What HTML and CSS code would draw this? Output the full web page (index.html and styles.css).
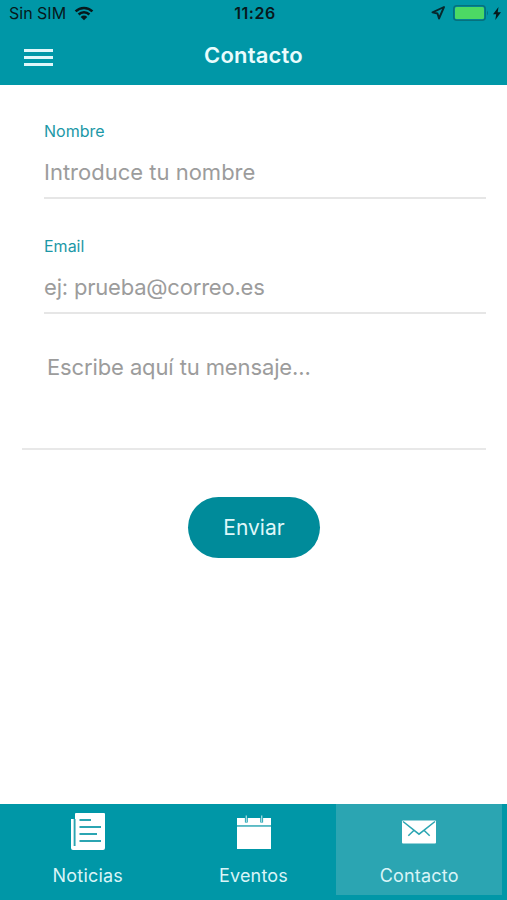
FILE: index.html
```html
<!DOCTYPE html>
<html lang="es">
<head>
    <meta charset="UTF-8">
    <meta name="viewport" content="width=device-width, initial-scale=1.0">
    <title>Contacto</title>
    <link rel="stylesheet" href="styles.css">
</head>
<body>
    <header class="header">
        <div class="status-bar">
            <div class="status-left">
                <span class="carrier">Sin SIM</span>
                <svg class="wifi" width="20" height="15" viewBox="0 0 20 15">
                    <path d="M1.6 5.4a12 12 0 0 1 16.8 0M4.6 8.5a7.7 7.7 0 0 1 10.8 0" fill="none" stroke="#07191c" stroke-width="2.5"/>
                    <path d="M6.7 10.9a4.7 4.7 0 0 1 6.6 0L10 14.2z" fill="#07191c"/>
                </svg>
            </div>
            <span class="time">11:26</span>
            <div class="status-right">
                <svg width="14" height="14" viewBox="0 0 14 14">
                    <path d="M13 1L1.5 6.3l5 1.2 1.5 5z" fill="none" stroke="#07282d" stroke-width="1.9" stroke-linejoin="round"/>
                </svg>
                <svg class="battery" width="36" height="16" viewBox="0 0 36 16">
                    <rect x="0.8" y="0.8" width="31.4" height="14.4" rx="3" fill="none" stroke="#06717d" stroke-width="1.6"/>
                    <rect x="2" y="2" width="29" height="12" rx="1.5" fill="#4cd964"/>
                    <path d="M34 5.5q2 2.5 0 5z" fill="#06717d"/>
                </svg>
                <svg class="bolt" width="8" height="13" viewBox="0 0 8 13">
                    <path d="M5.5 0L0 7.2h3.2L2.3 13 8 5.3H4.7z" fill="#07191c"/>
                </svg>
            </div>
        </div>
        <div class="nav-bar">
            <button class="menu" aria-label="Menú">
                <span></span>
                <span></span>
                <span></span>
            </button>
            <h1>Contacto</h1>
        </div>
    </header>

    <form class="contact-form">
        <div class="field">
            <label for="nombre">Nombre</label>
            <input type="text" id="nombre" placeholder="Introduce tu nombre">
        </div>
        <div class="field">
            <label for="email">Email</label>
            <input type="email" id="email" placeholder="ej: prueba@correo.es">
        </div>
        <textarea id="mensaje" placeholder="Escribe aquí tu mensaje..."></textarea>
        <button type="button" class="send">Enviar</button>
    </form>

    <nav class="tabs">
        <a class="tab">
            <svg width="36" height="38" viewBox="0 0 36 38">
                <path d="M1 6h4V1q0-1 1-1h28q1 0 1 1v34q0 2-2 2H3q-2 0-2-2z" fill="#fff"/>
                <path d="M4.6 6v27M9.5 7h11.5M9.5 14h21.5M9.5 21h17.5M9.5 28h21.5" fill="none" stroke="#2ba5b2" stroke-width="1.9"/>
            </svg>
            <span>Noticias</span>
        </a>
        <a class="tab">
            <svg width="36" height="38" viewBox="0 0 36 38">
                <path d="M1 5h34v7H1zM1 13.4h34V36H1z" fill="#fff"/>
                <path d="M1 12.7h34" stroke="#5bbac4" stroke-width="1.4"/>
                <path d="M10.3 3v6.5M25.7 3v6.5" stroke="#0097a7" stroke-width="2.8"/>
                <path d="M10.3 2.5V9M25.7 2.5V9" stroke="#a5dbe0" stroke-width="1.3"/>
            </svg>
            <span>Eventos</span>
        </a>
        <a class="tab active">
            <svg width="36" height="38" viewBox="0 0 36 38">
                <rect x="1" y="7.5" width="34" height="23" rx="1" fill="#fff"/>
                <path d="M2 8.5l16 12.7L34 8.5M12.8 17.5l-5.5 5.3M23.2 17.5l5.5 5.3" fill="none" stroke="#2ba5b2" stroke-width="1.5"/>
            </svg>
            <span>Contacto</span>
        </a>
    </nav>
</body>
</html>
```
FILE: styles.css
```css
* {
    box-sizing: border-box;
}
body {
    font-family: Inter, 'Liberation Sans', sans-serif;
    display: flex;
    flex-direction: column;
    height: 100vh;
    margin: 0;
    background-color: #fff;
}
button {
    border: none;
    cursor: pointer;
    font-family: inherit;
}
svg {
    display: block;
}

/* Cabecera */
.header {
    height: 85px;
    background-color: #0097a7;
}
.status-bar {
    display: grid;
    grid-template-columns: 1fr auto 1fr;
    align-items: center;
    height: 26px;
    padding: 0 6px 0 9px;
    color: #07191c;
    font-size: 16px;
}
.status-left,
.status-right {
    display: flex;
    align-items: center;
}
.status-left {
    gap: 8px;
}
.status-right {
    justify-content: flex-end;
}
.time {
    font-weight: 600;
    letter-spacing: 0.5px;
}
.battery {
    margin-left: 8px;
}
.bolt {
    margin-left: 4px;
}
.nav-bar {
    display: grid;
    grid-template-columns: 1fr auto 1fr;
    align-items: center;
    height: 59px;
    padding: 0 24px;
}
.menu {
    display: flex;
    flex-direction: column;
    gap: 4px;
    width: 29px;
    margin-top: 4px;
    padding: 0;
    background: none;
}
.menu span {
    height: 3px;
    background-color: #e0f7fa;
}
h1 {
    margin: 0 0 2px;
    color: #e9fcfd;
    font-size: 22px;
    font-weight: 600;
    letter-spacing: 0.2px;
}

/* Formulario */
.contact-form {
    display: flex;
    flex-direction: column;
    flex: 1;
    padding: 28px 21px 0 22px;
}
.field {
    display: flex;
    flex-direction: column;
    height: 86px;
    margin: 0 0 30px 22px;
    padding-top: 8px;
    border-bottom: 2px solid #e6e6e6;
}
.field + .field {
    margin-top: -1px;
    margin-bottom: 31px;
}
label {
    color: #1c98a7;
    font-size: 16px;
    line-height: 20px;
}
input,
textarea {
    padding: 0;
    border: none;
    outline: none;
    background: none;
    color: #333;
    font-family: inherit;
    font-size: 22px;
}
input {
    height: 32px;
    margin-top: 15px;
}
input::placeholder,
textarea::placeholder {
    color: #9c9c9c;
    opacity: 1;
}
#email {
    letter-spacing: -0.2px;
}
textarea {
    height: 105px;
    padding: 8px 25px;
    border-bottom: 2px solid #e8e8e8;
    letter-spacing: -0.12px;
    line-height: 28px;
    resize: none;
}
.send {
    align-self: center;
    width: 132px;
    height: 61px;
    margin-top: 47px;
    border-radius: 31px;
    background-color: #008b9a;
    color: #dff7f9;
    font-size: 21px;
}

/* Pestañas inferiores */
.tabs {
    display: flex;
    height: 96px;
    padding: 0 5px 5px;
    background-color: #0097a7;
}
.tab {
    display: flex;
    flex: 1;
    flex-direction: column;
    align-items: center;
    gap: 12px;
    padding-top: 9px;
    color: #d9f4f7;
    font-size: 18px;
    letter-spacing: 0.2px;
    line-height: 26px;
}
.tab.active {
    background-color: #2ba5b2;
}
```
